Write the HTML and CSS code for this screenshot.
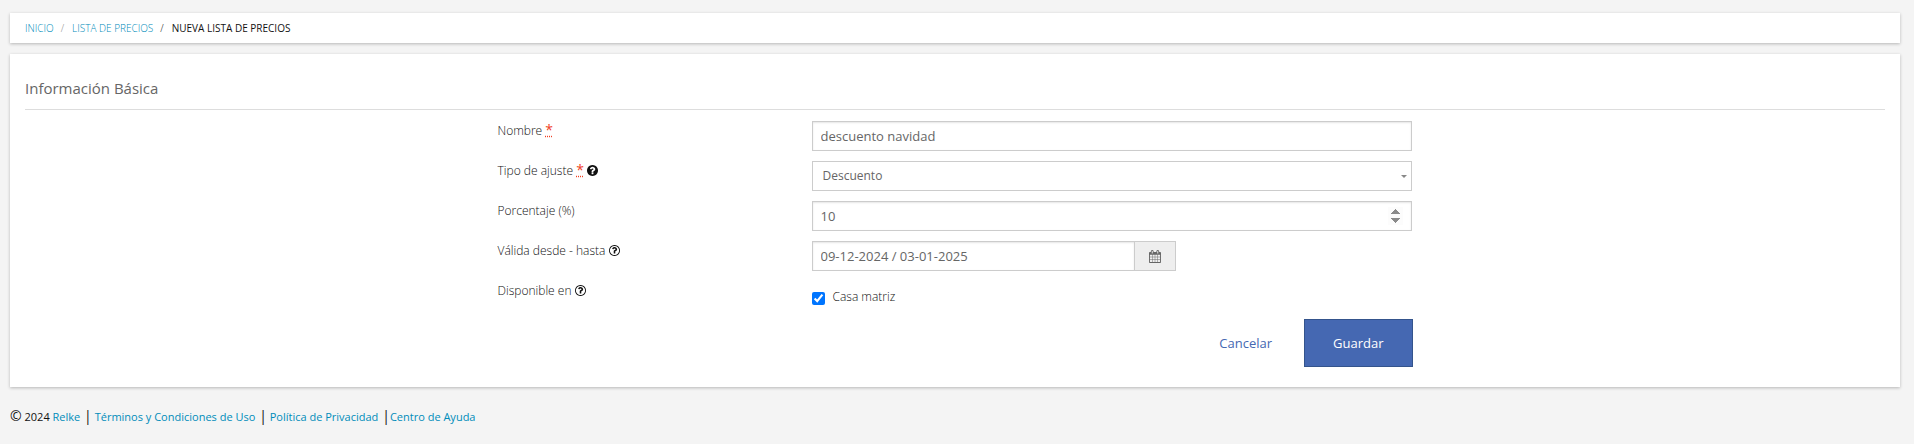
FILE: index.html
```html
<!DOCTYPE html>
<html lang="es">
<head>
    <meta charset="UTF-8">
    <meta name="viewport" content="width=device-width, initial-scale=1.0">
    <title>Nueva lista de precios</title>
    <link rel="stylesheet" href="styles.css">
</head>
<body>
    <!-- Icons -->
    <svg class="icon-defs" aria-hidden="true">
        <symbol id="icon-help" viewBox="0 0 1536 1792">
            <path d="M896 1376v-192q0-14-9-23t-23-9h-192q-14 0-23 9t-9 23v192q0 14 9 23t23 9h192q14 0 23-9t9-23zM1152 704q0-88-55.500-163t-138.500-116-170-41q-243 0-371 213-15 24 8 42l132 100q7 6 19 6 16 0 25-12 53-68 86-92 34-24 86-24 48 0 85.500 26t37.500 59q0 38-20 61t-68 45q-63 28-115.500 86.500t-52.500 125.500v36q0 14 9 23t23 9h192q14 0 23-9t9-23q0-19 21.500-49.500t54.500-49.500q32-18 49-28.500t46-35 44.500-48 28-60.500 12.500-81zM1536 896q0 209-103 385.500t-279.500 279.500-385.500 103-385.500-103-279.500-279.500-103-385.500 103-385.500 279.500-279.500 385.500-103 385.500 103 279.500 279.500 103 385.500z"/>
        </symbol>
        <symbol id="icon-help-outline" viewBox="0 0 1536 1792">
            <path d="M880 1136v160q0 14-9 23t-23 9h-160q-14 0-23-9t-9-23v-160q0-14 9-23t23-9h160q14 0 23 9t9 23zM1136 720q0 50-15 90t-45.500 69-52 44-59.500 36q-32 18-46.500 28t-26 24-11.500 29v32q0 14-9 23t-23 9h-160q-14 0-23-9t-9-23v-68q0-35 10.500-64.500t24-47.500 39-35.500 41-25.500 44.500-21q53-25 75-43t22-49q0-42-43.500-71.500t-95.500-29.500q-56 0-95 27-29 20-80 83-9 12-25 12-11 0-19-6l-108-82q-10-7-12-20t5-23q122-192 349-192 129 0 238.500 89.500t109.500 214.500zM768 256q-130 0-248.500 51t-204 136.500-136.500 204-51 248.500 51 248.500 136.500 204 204 136.500 248.500 51 248.500-51 204-136.500 136.500-204 51-248.500-51-248.500-136.500-204-204-136.500-248.500-51zM1536 896q0 209-103 385.500t-279.500 279.500-385.500 103-385.500-103-279.500-279.500-103-385.500 103-385.500 279.500-279.500 385.500-103 385.500 103 279.500 279.500 103 385.500z"/>
        </symbol>
        <symbol id="icon-calendar" viewBox="0 0 1664 1792">
            <path d="M128 1664h288v-288h-288v288zM480 1664h320v-288h-320v288zM128 1312h288v-320h-288v320zM480 1312h320v-320h-320v320zM128 928h288v-288h-288v288zM864 1664h320v-288h-320v288zM480 928h320v-288h-320v288zM1248 1664h288v-288h-288v288zM864 1312h320v-320h-320v320zM512 448v-288q0-13-9.500-22.500t-22.500-9.500h-64q-13 0-22.500 9.500t-9.500 22.500v288q0 13 9.500 22.500t22.500 9.500h64q13 0 22.500-9.500t9.500-22.500zM1248 1312h288v-320h-288v320zM864 928h320v-288h-320v288zM1248 928h288v-288h-288v288zM1280 448v-288q0-13-9.500-22.500t-22.500-9.500h-64q-13 0-22.500 9.500t-9.500 22.500v288q0 13 9.500 22.500t22.500 9.500h64q13 0 22.500-9.500t9.500-22.500zM1664 384v1280q0 52-38 90t-90 38h-1408q-52 0-90-38t-38-90v-1280q0-52 38-90t90-38h128v-96q0-66 47-113t113-47h64q66 0 113 47t47 113v96h384v-96q0-66 47-113t113-47h64q66 0 113 47t47 113v96h128q52 0 90 38t38 90z"/>
        </symbol>
    </svg>

    <nav class="breadcrumb">
        <a href="#">INICIO</a>
        <span class="separator">/</span>
        <a href="#">LISTA DE PRECIOS</a>
        <span class="separator dark">/</span>
        <span class="current">NUEVA LISTA DE PRECIOS</span>
    </nav>

    <main class="panel">
        <h1>Información Básica</h1>
        <form>
            <div class="form-group">
                <label for="name">Nombre <abbr title="requerido">*</abbr></label>
                <input type="text" id="name" class="form-control" value="descuento navidad">
            </div>
            <div class="form-group">
                <label for="adjustment">Tipo de ajuste <abbr title="requerido">*</abbr> <svg class="icon"><use href="#icon-help"/></svg></label>
                <div class="select-box">
                    <select id="adjustment" class="form-control">
                        <option selected>Descuento</option>
                        <option>Recargo</option>
                    </select>
                </div>
            </div>
            <div class="form-group">
                <label for="percentage">Porcentaje (%)</label>
                <input type="number" id="percentage" class="form-control" value="10">
            </div>
            <div class="form-group">
                <label for="validity">Válida desde - hasta <svg class="icon"><use href="#icon-help-outline"/></svg></label>
                <div class="input-group">
                    <input type="text" id="validity" class="form-control" value="09-12-2024 / 03-01-2025">
                    <button type="button" class="addon" aria-label="Elegir fechas"><svg class="icon"><use href="#icon-calendar"/></svg></button>
                </div>
            </div>
            <div class="form-group">
                <span class="label">Disponible en <svg class="icon"><use href="#icon-help-outline"/></svg></span>
                <div class="check">
                    <input type="checkbox" id="main-office" checked>
                    <label for="main-office">Casa matriz</label>
                </div>
            </div>
            <div class="form-actions">
                <a href="#" class="btn btn-link">Cancelar</a>
                <button type="submit" class="btn btn-primary">Guardar</button>
            </div>
        </form>
    </main>

    <footer>
        <span class="mark">©</span> 2024 <a href="#">Relke</a>
        <span class="bar">|</span>
        <a href="#">Términos y Condiciones de Uso</a>
        <span class="bar">|</span>
        <a href="#">Política de Privacidad</a>
        <span class="bar">|</span><a href="#">Centro de Ayuda</a>
    </footer>
</body>
</html>
```
FILE: styles.css
```css
:root {
    --bg-color: #f4f4f4;
    --text-color: #111;
    --text-secondary: #666;
    --link-color: #008cba;
    --primary-color: #4568b2;
    --border-color: #ccc;
}

* {
    box-sizing: border-box;
}
body {
    margin: 0;
    padding: 13px 14px 0 10px;
    font-family: "Open Sans", sans-serif;
    font-size: 12px;
    font-weight: 300;
    line-height: 18px;
    background-color: var(--bg-color);
    color: var(--text-color);
}
a {
    color: var(--link-color);
    text-decoration: none;
}
.icon-defs {
    display: none;
}
.icon {
    width: 11px;
    height: 13px;
    fill: currentColor;
    vertical-align: -2px;
}
.breadcrumb,
.panel {
    background-color: white;
    box-shadow: 0 1px 3px rgba(0,0,0,0.25);
}
.breadcrumb {
    display: flex;
    align-items: center;
    height: 30px;
    padding: 0 15px;
    margin-bottom: 11px;
    font-size: 10px;
}
.breadcrumb .separator {
    margin: 0 8px 0 7px;
    color: #888;
}
.breadcrumb .dark {
    color: var(--text-color);
}
.breadcrumb .current {
    font-weight: 400;
}
.panel {
    padding: 24px 15px 20px;
}
h1 {
    margin: 0 0 11px;
    padding-bottom: 10px;
    border-bottom: 1px solid #ddd;
    font-size: 15px;
    font-weight: 400;
    line-height: 21px;
    color: var(--text-secondary);
}
form {
    margin: 0 -15px;
}
.form-group {
    display: grid;
    grid-template-columns: 2fr 4fr;
    width: 50%;
    min-height: 30px;
    margin: 0 auto 10px 25%;
}
.form-group > label,
.form-group > .label {
    padding: 1px 0 0 15px;
}
.form-group > input,
.select-box,
.input-group,
.check {
    margin: 0 16px 0 14px;
}
abbr {
    color: #f04124;
    font-weight: 400;
    font-size: 14px;
    line-height: 12px;
    text-decoration: underline dotted;
}
.form-control {
    width: 100%;
    height: 30px;
    padding: 0 8px;
    border: 1px solid var(--border-color);
    border-radius: 0;
    background-color: white;
    box-shadow: inset 0 1px 2px rgba(0,0,0,0.1);
    font-family: inherit;
    font-size: 13px;
    color: var(--text-secondary);
}
.form-group > .form-control {
    width: auto;
}
.form-control[type="number"]::-webkit-inner-spin-button {
    opacity: 1;
    background-color: #eee;
}
.select-box {
    position: relative;
}
.select-box select {
    appearance: none;
    padding: 0 10px 1px;
    box-shadow: none;
    font-size: 12px;
}
.select-box::after {
    content: "";
    position: absolute;
    top: 14px;
    right: 5px;
    border: 3px solid transparent;
    border-top-color: #888;
    border-bottom: 0;
}
.input-group {
    display: flex;
    width: 364px;
}
.addon {
    flex: 0 0 41px;
    border: 1px solid var(--border-color);
    border-left: 0;
    background-color: #eee;
    color: var(--text-secondary);
}
.addon .icon {
    width: 12px;
}
.check {
    display: flex;
    align-items: flex-start;
    gap: 8px;
    padding-top: 7px;
}
.check input {
    width: 13px;
    height: 13px;
    margin: 4px 0 0;
}
.form-actions {
    display: flex;
    justify-content: flex-end;
    gap: 3px;
    width: 50%;
    margin: -2px 0 0 25%;
    padding: 0 15px;
}
.btn {
    padding: 14px 28px;
    border: 1px solid transparent;
    font-family: inherit;
    font-size: 13px;
    font-weight: 400;
    line-height: 18px;
    cursor: pointer;
}
.btn-link {
    color: var(--primary-color);
}
.btn-primary {
    background-color: var(--primary-color);
    border-color: #34548c;
    color: white;
}
footer {
    padding-top: 20px;
    font-size: 11px;
    font-weight: 400;
}
.mark,
.bar {
    font-size: 14px;
}
.bar {
    margin-left: 1px;
}
```
